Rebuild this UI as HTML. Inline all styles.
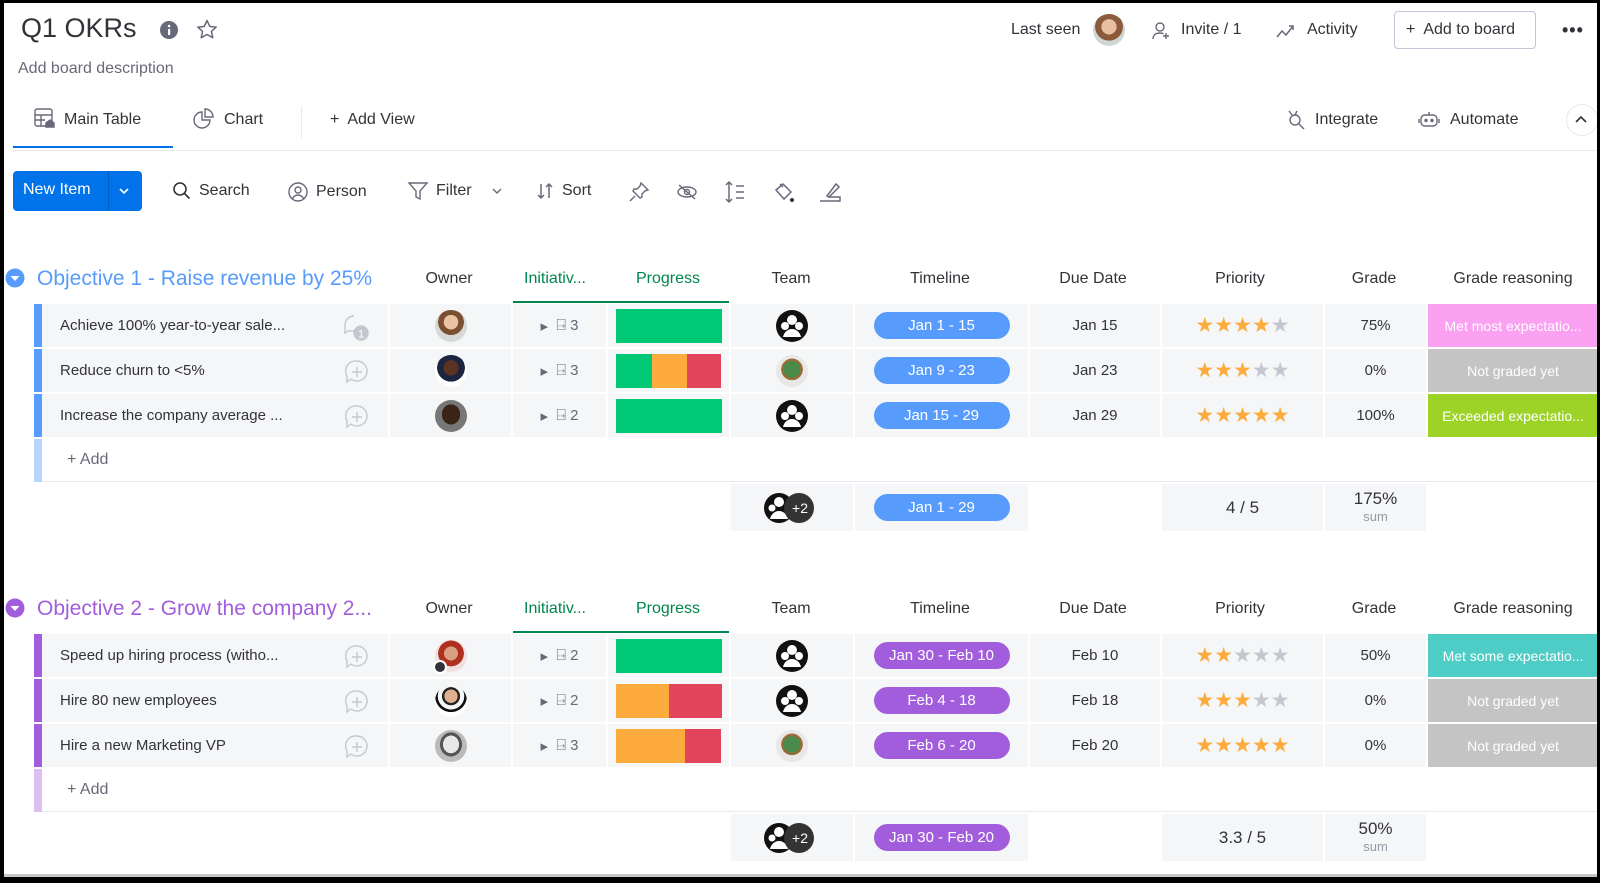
<!DOCTYPE html>
<html><head><meta charset="utf-8">
<style>
*{box-sizing:border-box;margin:0;padding:0}
body{width:1600px;height:883px;background:#000;font-family:"Liberation Sans",Arial,sans-serif;color:#323338;overflow:hidden;position:relative}
.page{position:absolute;left:4px;top:3px;width:1593px;height:874px;background:#fff;overflow:hidden}
.a{position:absolute}
.t{position:absolute;white-space:nowrap}
.row{position:absolute;left:0;width:1600px;height:43px}
.c{position:absolute;top:0;height:43px;background:#f5f6f8;display:flex;align-items:center;justify-content:center;font-size:15px;color:#323338}
.bar{position:absolute;left:30px;top:0;width:8px;height:43px}
.nm{left:38px;width:346px;justify-content:flex-start;padding-left:18px}
.ow{left:386px;width:121px}
.in{left:509px;width:93px;color:#676879}
.pr{left:604px;width:121px}
.tm{left:727px;width:122px}
.tl{left:851px;width:173px}
.du{left:1026px;width:130px;color:#323338}
.pi{left:1158px;width:161px}
.gr{left:1321px;width:101px}
.re{left:1424px;width:170px;color:#fff;font-size:14px}
.pill{width:136px;height:27px;border-radius:14px;color:#fff;display:flex;align-items:center;justify-content:center;font-size:15px}
.blue{background:#579bfc}.purp{background:#a25ddc}
.av{width:32px;height:32px;border-radius:50%}
.stars{color:#fdab3d;font-size:21px;letter-spacing:0px}
.stars i{color:#c5c7d0;font-style:normal}
.pbar{width:106px;height:34px;display:flex}
.g{background:#00c875}.o{background:#fdab3d}.r{background:#e2445c}
.hdr{position:absolute;font-size:16px;color:#323338;transform:translateX(-50%);white-space:nowrap}
.cm{position:absolute;right:18px;top:10px}
.add{position:absolute;left:38px;height:43px;width:1560px;border-bottom:1px solid #e6e9ef;display:flex;align-items:center;padding-left:25px;font-size:16px;color:#676879}
.sum{position:absolute;height:47px;background:#f5f6f8;display:flex;align-items:center;justify-content:center;font-size:16px}
.tool{position:absolute;top:178px;font-size:16px;color:#323338;display:flex;align-items:center;gap:7px;white-space:nowrap}
</style></head><body>
<div class="page">
<div class="t" style="left:17px;top:10px;font-size:27px;color:#323338">Q1 OKRs</div>
<svg class="a" style="left:155px;top:17px" width="20" height="20" viewBox="0 0 20 20"><circle cx="10" cy="10" r="9" fill="#676879"/><rect x="9" y="9" width="2.2" height="6" fill="#fff"/><circle cx="10.1" cy="6" r="1.3" fill="#fff"/></svg>
<svg class="a" style="left:191px;top:15px" width="24" height="24" viewBox="0 0 24 24"><path d="M12 2.5l2.8 6 6.4.6-4.8 4.3 1.4 6.3L12 16.5l-5.8 3.2 1.4-6.3L2.8 9.1l6.4-.6z" fill="none" stroke="#676879" stroke-width="1.5" stroke-linejoin="round"/></svg>
<div class="t" style="left:14px;top:57px;font-size:16px;color:#676879">Add board description</div>

<div class="t" style="left:1007px;top:18px;font-size:16px">Last seen</div>
<div class="a av" style="left:1089px;top:11px;width:32px;height:32px;background:radial-gradient(circle at 50% 40%,#e8c0a0 0 30%,#8a5a3a 31% 55%,#cfd6d4 56%)"></div>
<svg class="a" style="left:1147px;top:18px" width="20" height="20" viewBox="0 0 20 20" fill="none" stroke="#676879" stroke-width="1.4"><circle cx="9" cy="6" r="4"/><path d="M2 18c0-4 3-6 7-6 1.5 0 2.5.3 3.5.8"/><path d="M15 12v6M12 15h6"/></svg>
<div class="t" style="left:1177px;top:18px;font-size:16px">Invite / 1</div>
<svg class="a" style="left:1272px;top:19px" width="20" height="18" viewBox="0 0 20 18" fill="none" stroke="#676879" stroke-width="1.5"><path d="M1 15l5-6 4 4 7-9"/><path d="M13 4h4v4"/></svg>
<div class="t" style="left:1303px;top:18px;font-size:16px">Activity</div>
<div class="a" style="left:1390px;top:8px;width:142px;height:38px;border:1px solid #c3c6d4;border-radius:4px"></div>
<div class="t" style="left:1402px;top:18px;font-size:16px">+&nbsp; Add to board</div>
<div class="t" style="left:1558px;top:17px;font-size:18px;letter-spacing:1px;font-weight:bold">•••</div>

<svg class="a" style="left:29px;top:104px" width="24" height="24" viewBox="0 0 24 24" fill="none" stroke="#676879" stroke-width="1.4"><rect x="2" y="2" width="17" height="17" rx="2"/><path d="M2 8h17M2 13h10M8 8v11"/><path d="M13 20v-4l4-3 4 3v4z" fill="#676879"/></svg>
<div class="t" style="left:60px;top:108px;font-size:16px">Main Table</div>
<svg class="a" style="left:188px;top:105px" width="22" height="22" viewBox="0 0 22 22" fill="none" stroke="#676879" stroke-width="1.4"><path d="M10 4a8 8 0 1 0 8 8h-8z"/><path d="M13 1v8h8a8 8 0 0 0-8-8z"/></svg>
<div class="t" style="left:220px;top:108px;font-size:16px">Chart</div>
<div class="a" style="left:297px;top:103px;width:1px;height:32px;background:#e6e9ef"></div>
<div class="t" style="left:326px;top:108px;font-size:16px">+&nbsp; Add View</div>
<div class="a" style="left:9px;top:143px;width:160px;height:2px;background:#0073ea"></div>
<div class="a" style="left:9px;top:147px;width:1590px;height:1px;background:#e6e9ef"></div>
<svg class="a" style="left:1281px;top:106px" width="22" height="22" viewBox="0 0 22 22" fill="none" stroke="#676879" stroke-width="1.4"><path d="M4 2l3 4M12 2l-2 4"/><circle cx="10" cy="11" r="5"/><path d="M14 15l5 5"/></svg>
<div class="t" style="left:1311px;top:108px;font-size:16px">Integrate</div>
<svg class="a" style="left:1414px;top:107px" width="22" height="20" viewBox="0 0 22 20" fill="none" stroke="#676879" stroke-width="1.4"><rect x="3" y="5" width="16" height="11" rx="4"/><path d="M11 2v3M1 9v4M21 9v4"/><circle cx="8" cy="10.5" r="1" fill="#676879"/><circle cx="14" cy="10.5" r="1" fill="#676879"/></svg>
<div class="t" style="left:1446px;top:108px;font-size:16px">Automate</div>
<div class="a" style="left:1562px;top:101px;width:32px;height:32px;border:1px solid #e6e9ef;border-radius:50%"></div>
<svg class="a" style="left:1570px;top:110px" width="14" height="12" viewBox="0 0 14 12"><path d="M2 9l5-5 5 5" fill="none" stroke="#323338" stroke-width="1.6"/></svg>

<div class="a" style="left:9px;top:168px;width:129px;height:40px;background:#0073ea;border-radius:4px"></div>
<div class="a" style="left:104px;top:168px;width:1px;height:40px;background:#0060b9"></div>
<div class="t" style="left:19px;top:178px;font-size:16px;color:#fff">New Item</div>
<svg class="a" style="left:114px;top:183px" width="12" height="10" viewBox="0 0 12 10"><path d="M2 3l4 4 4-4" fill="none" stroke="#fff" stroke-width="1.6"/></svg>
<div class="tool" style="left:168px"><svg width="20" height="20" viewBox="0 0 20 20" fill="none" stroke="#323338" stroke-width="1.6"><circle cx="8" cy="8" r="6"/><path d="M12.5 12.5l5 5"/></svg>Search</div>
<div class="tool" style="left:283px"><svg width="22" height="22" viewBox="0 0 22 22" fill="none" stroke="#676879" stroke-width="1.4"><circle cx="11" cy="11" r="9"/><circle cx="11" cy="9" r="3"/><path d="M5.5 17.5c1.5-2.5 3.5-3.5 5.5-3.5s4 1 5.5 3.5"/></svg>Person</div>
<div class="tool" style="left:403px"><svg width="22" height="20" viewBox="0 0 22 20" fill="none" stroke="#676879" stroke-width="1.4"><path d="M2 2h18l-7 8v8l-4-2v-6z"/></svg>Filter<svg style="margin-left:12px" width="12" height="10" viewBox="0 0 12 10"><path d="M2 3l4 4 4-4" fill="none" stroke="#676879" stroke-width="1.4"/></svg></div>
<div class="tool" style="left:531px"><svg width="20" height="20" viewBox="0 0 20 20" fill="none" stroke="#676879" stroke-width="1.5"><path d="M6 3v14M3 14l3 3 3-3M14 17V3M11 6l3-3 3 3"/></svg>Sort</div>
<svg class="a" style="left:624px;top:178px" width="22" height="22" viewBox="0 0 22 22" fill="none" stroke="#676879" stroke-width="1.4"><path d="M13 2l7 7-3 1-3 3 0 3-2 1-7-7 1-2 3 0 3-3z"/><path d="M7 15l-5 5"/></svg>
<svg class="a" style="left:672px;top:180px" width="22" height="18" viewBox="0 0 22 18" fill="none" stroke="#676879" stroke-width="1.4"><ellipse cx="11" cy="9" rx="9" ry="5"/><circle cx="11" cy="9" r="2.5"/><path d="M3 2l16 14"/></svg>
<svg class="a" style="left:720px;top:177px" width="22" height="24" viewBox="0 0 22 24" fill="none" stroke="#676879" stroke-width="1.5"><path d="M5 2v20M2 5l3-3 3 3M2 19l3 3 3-3M12 6h8M12 12h8M12 18h8"/></svg>
<svg class="a" style="left:768px;top:177px" width="24" height="24" viewBox="0 0 24 24" fill="none" stroke="#676879" stroke-width="1.5"><path d="M4 10l7-6 8 8-7 7z"/><path d="M8 4l3 3"/><circle cx="20" cy="20" r="2" fill="#323338" stroke="none"/></svg>
<svg class="a" style="left:814px;top:178px" width="24" height="22" viewBox="0 0 24 22" fill="none" stroke="#676879" stroke-width="1.5"><path d="M2 20h20v-4H10M9 15l9-12 3 3-10 10z"/></svg>

<svg class="a" style="left:1px;top:265px" width="20" height="20" viewBox="0 0 20 20"><circle cx="10" cy="10" r="9.5" fill="#579bfc"/><path d="M5.5 8l4.5 5 4.5-5z" fill="#fff"/></svg>
<div class="t" style="left:33px;top:264px;font-size:21px;color:#579bfc">Objective 1 - Raise revenue by 25%</div>
<div class="hdr" style="left:445px;top:267px">Owner</div>
<div class="hdr" style="left:551px;top:267px;color:#00854d">Initiativ...</div>
<div class="hdr" style="left:664px;top:267px;color:#00854d">Progress</div>
<div class="hdr" style="left:787px;top:267px">Team</div>
<div class="hdr" style="left:936px;top:267px">Timeline</div>
<div class="hdr" style="left:1089px;top:267px">Due Date</div>
<div class="hdr" style="left:1236px;top:267px">Priority</div>
<div class="hdr" style="left:1370px;top:267px">Grade</div>
<div class="hdr" style="left:1509px;top:267px">Grade reasoning</div>
<div class="a" style="left:509px;top:298px;width:216px;height:2px;background:#00854d"></div>

<div class="row" style="top:301px">
<div class="bar" style="background:#579bfc"></div>
<div class="c nm">Achieve 100% year-to-year sale...<svg class="cm" width="28" height="28" viewBox="0 0 28 28" fill="none" stroke="#c5c7d0" stroke-width="1.4"><path d="M12 2a9 9 0 0 0-9 9v8l3-2h6"/><circle cx="19" cy="19" r="7" fill="#c5c7d0"/><text x="19" y="23.5" font-size="11" fill="#fff" stroke="none" text-anchor="middle" font-family="Liberation Sans">1</text></svg></div>
<div class="c ow"><div class="av" style="background:radial-gradient(circle at 50% 38%,#eac3a3 0 28%,#7b5030 29% 50%,#d6d9d6 51%)"></div></div>
<div class="c in">▸&nbsp;&nbsp;<span style="font-size:16px">⍈</span>&nbsp;3</div>
<div class="c pr"><div class="pbar"><div class="g" style="width:100%"></div></div></div>
<div class="c tm"><svg width="34" height="34" viewBox="0 0 34 34"><circle cx="17" cy="17" r="16" fill="#111"/><circle cx="17" cy="11" r="5" fill="#fff"/><circle cx="10" cy="17" r="4" fill="#fff"/><circle cx="24" cy="17" r="4" fill="#fff"/><path d="M8 28c1-5 5-8 9-8s8 3 9 8z" fill="#fff"/></svg></div>
<div class="c tl"><div class="pill blue">Jan 1 - 15</div></div>
<div class="c du">Jan 15</div>
<div class="c pi stars">★★★★<i>★</i></div>
<div class="c gr">75%</div>
<div class="c re" style="background:#faa1f1">Met most expectatio...</div>
</div>

<div class="row" style="top:346px">
<div class="bar" style="background:#579bfc"></div>
<div class="c nm">Reduce churn to &lt;5%<svg class="cm" width="26" height="26" viewBox="0 0 26 26" fill="none" stroke="#c5c7d0" stroke-width="1.4"><path d="M13 2a10 10 0 1 1-6 18l-4 3v-6a10 10 0 0 1 10-15z"/><path d="M13 8v10M8 13h10"/></svg></div>
<div class="c ow"><div class="av" style="background:radial-gradient(circle at 50% 40%,#5a3420 0 30%,#1c2440 31% 55%,#fff 56%)"></div></div>
<div class="c in">▸&nbsp;&nbsp;<span style="font-size:16px">⍈</span>&nbsp;3</div>
<div class="c pr"><div class="pbar"><div class="g" style="width:34%"></div><div class="o" style="width:33%"></div><div class="r" style="width:33%"></div></div></div>
<div class="c tm"><div class="av" style="background:radial-gradient(circle at 50% 45%,#4a8a4a 0 35%,#9c6b3a 36% 45%,#e8e8e6 46%)"></div></div>
<div class="c tl"><div class="pill blue">Jan 9 - 23</div></div>
<div class="c du">Jan 23</div>
<div class="c pi stars">★★★<i>★★</i></div>
<div class="c gr">0%</div>
<div class="c re" style="background:#c4c4c4">Not graded yet</div>
</div>

<div class="row" style="top:391px">
<div class="bar" style="background:#579bfc"></div>
<div class="c nm">Increase the company average ...<svg class="cm" width="26" height="26" viewBox="0 0 26 26" fill="none" stroke="#c5c7d0" stroke-width="1.4"><path d="M13 2a10 10 0 1 1-6 18l-4 3v-6a10 10 0 0 1 10-15z"/><path d="M13 8v10M8 13h10"/></svg></div>
<div class="c ow"><div class="av" style="background:radial-gradient(ellipse at 50% 45%,#3a2418 0 40%,#777 41%)"></div></div>
<div class="c in">▸&nbsp;&nbsp;<span style="font-size:16px">⍈</span>&nbsp;2</div>
<div class="c pr"><div class="pbar"><div class="g" style="width:100%"></div></div></div>
<div class="c tm"><svg width="34" height="34" viewBox="0 0 34 34"><circle cx="17" cy="17" r="16" fill="#111"/><circle cx="17" cy="11" r="5" fill="#fff"/><circle cx="10" cy="17" r="4" fill="#fff"/><circle cx="24" cy="17" r="4" fill="#fff"/><path d="M8 28c1-5 5-8 9-8s8 3 9 8z" fill="#fff"/></svg></div>
<div class="c tl"><div class="pill blue">Jan 15 - 29</div></div>
<div class="c du">Jan 29</div>
<div class="c pi stars">★★★★★</div>
<div class="c gr">100%</div>
<div class="c re" style="background:#9cd326">Exceeded expectatio...</div>
</div>

<div class="bar a" style="left:30px;top:436px;height:43px;width:8px;background:#b8d4fc"></div>
<div class="add" style="top:436px">+ Add</div>

<div class="sum" style="left:727px;top:481px;width:122px"><svg width="60" height="34" viewBox="0 0 60 34"><circle cx="17" cy="17" r="15" fill="#111"/><circle cx="17" cy="11" r="5" fill="#fff"/><circle cx="10" cy="17" r="3.5" fill="#fff"/><path d="M8 28c1-5 5-8 9-8s8 3 9 8z" fill="#fff"/><circle cx="37" cy="17" r="15" fill="#333"/><text x="38" y="22" font-size="14" fill="#fff" text-anchor="middle" font-family="Liberation Sans">+2</text></svg></div>
<div class="sum" style="left:851px;top:481px;width:173px"><div class="pill blue">Jan 1 - 29</div></div>
<div class="sum" style="left:1158px;top:481px;width:161px;font-size:17px">4 / 5</div>
<div class="sum" style="left:1321px;top:481px;width:101px;flex-direction:column;line-height:18px"><span style="font-size:17px">175%</span><span style="font-size:13px;color:#9699a6">sum</span></div>

<svg class="a" style="left:1px;top:595px" width="20" height="20" viewBox="0 0 20 20"><circle cx="10" cy="10" r="9.5" fill="#a25ddc"/><path d="M5.5 8l4.5 5 4.5-5z" fill="#fff"/></svg>
<div class="t" style="left:33px;top:594px;font-size:21px;color:#a25ddc">Objective 2 - Grow the company 2...</div>
<div class="hdr" style="left:445px;top:597px">Owner</div>
<div class="hdr" style="left:551px;top:597px;color:#00854d">Initiativ...</div>
<div class="hdr" style="left:664px;top:597px;color:#00854d">Progress</div>
<div class="hdr" style="left:787px;top:597px">Team</div>
<div class="hdr" style="left:936px;top:597px">Timeline</div>
<div class="hdr" style="left:1089px;top:597px">Due Date</div>
<div class="hdr" style="left:1236px;top:597px">Priority</div>
<div class="hdr" style="left:1370px;top:597px">Grade</div>
<div class="hdr" style="left:1509px;top:597px">Grade reasoning</div>
<div class="a" style="left:509px;top:628px;width:216px;height:2px;background:#00854d"></div>

<div class="row" style="top:631px">
<div class="bar" style="background:#a25ddc"></div>
<div class="c nm">Speed up hiring process (witho...<svg class="cm" width="26" height="26" viewBox="0 0 26 26" fill="none" stroke="#c5c7d0" stroke-width="1.4"><path d="M13 2a10 10 0 1 1-6 18l-4 3v-6a10 10 0 0 1 10-15z"/><path d="M13 8v10M8 13h10"/></svg></div>
<div class="c ow"><div class="av" style="position:relative;background:radial-gradient(circle at 50% 42%,#d8a080 0 28%,#b03020 29% 52%,#f0e0e0 53%)"><div class="a" style="left:-2px;bottom:-2px;width:14px;height:14px;border-radius:50%;background:#323338;border:2px solid #fff"></div></div></div>
<div class="c in">▸&nbsp;&nbsp;<span style="font-size:16px">⍈</span>&nbsp;2</div>
<div class="c pr"><div class="pbar"><div class="g" style="width:100%"></div></div></div>
<div class="c tm"><svg width="34" height="34" viewBox="0 0 34 34"><circle cx="17" cy="17" r="16" fill="#111"/><circle cx="17" cy="11" r="5" fill="#fff"/><circle cx="10" cy="17" r="4" fill="#fff"/><circle cx="24" cy="17" r="4" fill="#fff"/><path d="M8 28c1-5 5-8 9-8s8 3 9 8z" fill="#fff"/></svg></div>
<div class="c tl"><div class="pill purp">Jan 30 - Feb 10</div></div>
<div class="c du">Feb 10</div>
<div class="c pi stars">★★<i>★★★</i></div>
<div class="c gr">50%</div>
<div class="c re" style="background:#4eccc6">Met some expectatio...</div>
</div>

<div class="row" style="top:676px">
<div class="bar" style="background:#a25ddc"></div>
<div class="c nm">Hire 80 new employees<svg class="cm" width="26" height="26" viewBox="0 0 26 26" fill="none" stroke="#c5c7d0" stroke-width="1.4"><path d="M13 2a10 10 0 1 1-6 18l-4 3v-6a10 10 0 0 1 10-15z"/><path d="M13 8v10M8 13h10"/></svg></div>
<div class="c ow"><div class="av" style="background:radial-gradient(circle at 50% 35%,#e0b090 0 25%,#222 26% 34%,#f5f5f5 35% 50%,#111 51% 60%,#fff 61%)"></div></div>
<div class="c in">▸&nbsp;&nbsp;<span style="font-size:16px">⍈</span>&nbsp;2</div>
<div class="c pr"><div class="pbar"><div class="o" style="width:50%"></div><div class="r" style="width:50%"></div></div></div>
<div class="c tm"><svg width="34" height="34" viewBox="0 0 34 34"><circle cx="17" cy="17" r="16" fill="#111"/><circle cx="17" cy="11" r="5" fill="#fff"/><circle cx="10" cy="17" r="4" fill="#fff"/><circle cx="24" cy="17" r="4" fill="#fff"/><path d="M8 28c1-5 5-8 9-8s8 3 9 8z" fill="#fff"/></svg></div>
<div class="c tl"><div class="pill purp">Feb 4 - 18</div></div>
<div class="c du">Feb 18</div>
<div class="c pi stars">★★★<i>★★</i></div>
<div class="c gr">0%</div>
<div class="c re" style="background:#c4c4c4">Not graded yet</div>
</div>

<div class="row" style="top:721px">
<div class="bar" style="background:#a25ddc"></div>
<div class="c nm">Hire a new Marketing VP<svg class="cm" width="26" height="26" viewBox="0 0 26 26" fill="none" stroke="#c5c7d0" stroke-width="1.4"><path d="M13 2a10 10 0 1 1-6 18l-4 3v-6a10 10 0 0 1 10-15z"/><path d="M13 8v10M8 13h10"/></svg></div>
<div class="c ow"><div class="av" style="background:radial-gradient(ellipse at 50% 45%,#e8e8e8 0 35%,#555 36% 48%,#bbb 49%)"></div></div>
<div class="c in">▸&nbsp;&nbsp;<span style="font-size:16px">⍈</span>&nbsp;3</div>
<div class="c pr"><div class="pbar"><div class="o" style="width:66%"></div><div class="r" style="width:34%"></div></div></div>
<div class="c tm"><div class="av" style="background:radial-gradient(circle at 50% 45%,#4a8a4a 0 35%,#9c6b3a 36% 45%,#e8e8e6 46%)"></div></div>
<div class="c tl"><div class="pill purp">Feb 6 - 20</div></div>
<div class="c du">Feb 20</div>
<div class="c pi stars">★★★★★</div>
<div class="c gr">0%</div>
<div class="c re" style="background:#c4c4c4">Not graded yet</div>
</div>

<div class="bar a" style="left:30px;top:766px;height:43px;width:8px;background:#dcbef0"></div>
<div class="add" style="top:766px">+ Add</div>

<div class="sum" style="left:727px;top:811px;width:122px"><svg width="60" height="34" viewBox="0 0 60 34"><circle cx="17" cy="17" r="15" fill="#111"/><circle cx="17" cy="11" r="5" fill="#fff"/><circle cx="10" cy="17" r="3.5" fill="#fff"/><path d="M8 28c1-5 5-8 9-8s8 3 9 8z" fill="#fff"/><circle cx="37" cy="17" r="15" fill="#333"/><text x="38" y="22" font-size="14" fill="#fff" text-anchor="middle" font-family="Liberation Sans">+2</text></svg></div>
<div class="sum" style="left:851px;top:811px;width:173px"><div class="pill purp">Jan 30 - Feb 20</div></div>
<div class="sum" style="left:1158px;top:811px;width:161px;font-size:17px">3.3 / 5</div>
<div class="sum" style="left:1321px;top:811px;width:101px;flex-direction:column;line-height:18px"><span style="font-size:17px">50%</span><span style="font-size:13px;color:#9699a6">sum</span></div>

<div class="a" style="left:0;top:871px;width:1600px;height:3px;background:#c8c8c8"></div>
</div>
</body></html>
